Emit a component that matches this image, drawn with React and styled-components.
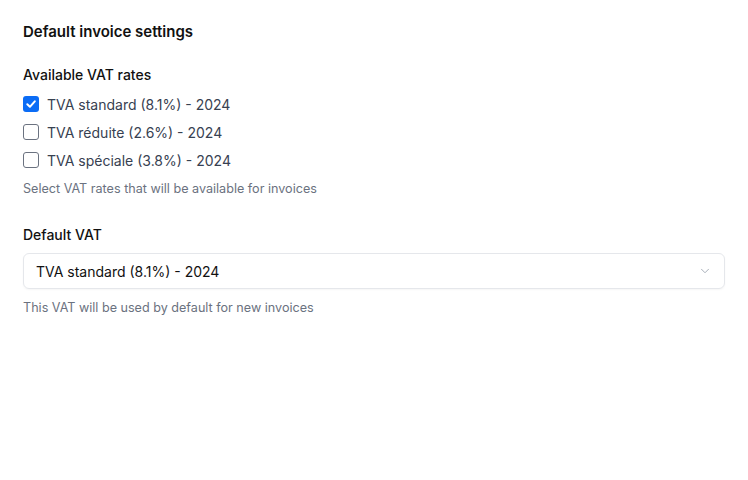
import React, { useState } from "react";
import styled, { createGlobalStyle } from "styled-components";

const GlobalStyle = createGlobalStyle`
  body {
    margin: 0;
    background: #fff;
    font-family: Inter, "Noto Sans", sans-serif;
    color: #111827;
  }
`;

const Page = styled.div`
  padding: 22px 23px;
  display: flex;
  flex-direction: column;
`;

const Title = styled.h3`
  margin: 0 0 23px 0;
  font-size: 15px;
  font-weight: 600;
  line-height: 20px;
  color: #111;
`;

const Section = styled.div`
  display: flex;
  flex-direction: column;
  margin-bottom: ${(props) => props.gap || "0"};
`;

const Label = styled.div`
  font-size: 14px;
  font-weight: 500;
  line-height: 20px;
  color: #111;
  margin-bottom: ${(props) => props.gap || "8px"};
`;

const CheckList = styled.div`
  display: flex;
  flex-direction: column;
  gap: 8px;
`;

const CheckRow = styled.label`
  display: flex;
  align-items: center;
  gap: 8px;
  height: 20px;
  font-size: 14px;
  color: #374151;
  cursor: pointer;
`;

const Box = styled.span`
  width: 16px;
  height: 16px;
  box-sizing: border-box;
  border-radius: 3px;
  display: flex;
  align-items: center;
  justify-content: center;
  background: ${(props) => (props.checked ? "#0b6cf5" : "#fff")};
  border: ${(props) => (props.checked ? "none" : "1px solid #6b7280")};
`;

const Help = styled.div`
  font-size: 12.6px;
  line-height: 16px;
  color: #6b7280;
  margin-top: ${(props) => props.top || "8px"};
`;

const Select = styled.div`
  height: 36px;
  box-sizing: border-box;
  border: 1px solid #e5e7eb;
  border-radius: 6px;
  display: flex;
  align-items: center;
  justify-content: space-between;
  padding: 0 12px;
  font-size: 14px;
  color: #111;
  box-shadow: 0 1px 2px rgba(0, 0, 0, 0.04);
`;

const rates = [
  "TVA standard (8.1%) - 2024",
  "TVA réduite (2.6%) - 2024",
  "TVA spéciale (3.8%) - 2024",
];

export default function App() {
  const [checked, setChecked] = useState([true, false, false]);
  const toggle = (i) =>
    setChecked((c) => c.map((v, j) => (j === i ? !v : v)));

  return (
    <Page>
      <GlobalStyle />
      <Title>Default invoice settings</Title>
      <Section gap="28px">
        <Label gap="9px">Available VAT rates</Label>
        <CheckList>
          {rates.map((r, i) => (
            <CheckRow key={r} onClick={() => toggle(i)}>
              <Box checked={checked[i]}>
                {checked[i] && (
                  <svg width="12" height="12" viewBox="0 0 12 12">
                    <path
                      d="M2.3 6.3 L4.9 8.8 L9.8 3.3"
                      fill="none"
                      stroke="#fff"
                      strokeWidth="2"
                      strokeLinecap="round"
                      strokeLinejoin="round"
                    />
                  </svg>
                )}
              </Box>
              {r}
            </CheckRow>
          ))}
        </CheckList>
        <Help top="11px">Select VAT rates that will be available for invoices</Help>
      </Section>
      <Section>
        <Label gap="8px">Default VAT</Label>
        <Select>
          <span>TVA standard (8.1%) - 2024</span>
          <svg width="14" height="14" viewBox="0 0 24 24" fill="none" stroke="#9ca3af" strokeWidth="1.5" strokeLinecap="round" strokeLinejoin="round">
            <path d="M6 9l6 6 6-6" />
          </svg>
        </Select>
        <Help top="11px">This VAT will be used by default for new invoices</Help>
      </Section>
    </Page>
  );
}
